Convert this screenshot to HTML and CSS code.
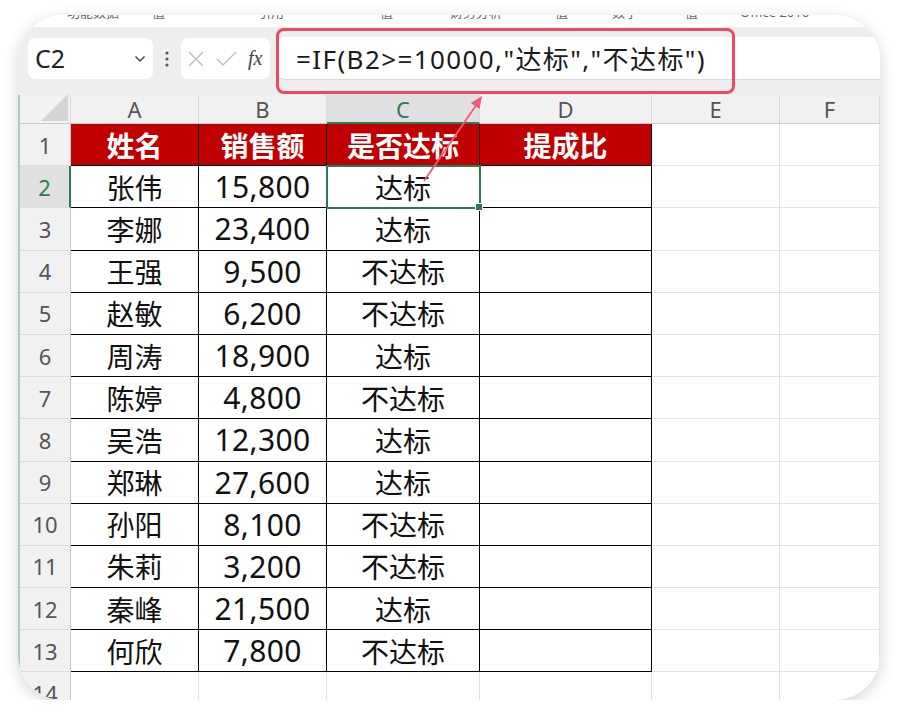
FILE: index.html
```html
<!DOCTYPE html>
<html lang="zh">
<head>
<meta charset="utf-8">
<link rel="stylesheet" href="styles.css">
</head>
<body>
<div class="card">
  <div class="ribbon">
    <span>功能数据</span><span>值</span><span>引用</span><span>值</span><span>财务分析</span><span>值</span><span>数字</span><span>值</span><span>Office 2016</span>
  </div>
  <div class="fbar">
    <div class="namebox">
      <span class="ref">C2</span>
      <svg class="chev" width="12" height="8" viewBox="0 0 12 8"><path d="M1.5 1.5 L6 6 L10.5 1.5" fill="none" stroke="#444" stroke-width="1.5"/></svg>
    </div>
    <div class="sep"><svg width="4" height="16" viewBox="0 0 4 16"><circle cx="2" cy="2" r="1.6" fill="#555"/><circle cx="2" cy="8" r="1.6" fill="#555"/><circle cx="2" cy="14" r="1.6" fill="#555"/></svg></div>
    <div class="fxbox">
      <svg width="16" height="16" viewBox="0 0 16 16"><path d="M1 1 L15 15 M15 1 L1 15" stroke="#bdbdbd" stroke-width="1.4" fill="none"/></svg>
      <svg width="21" height="16" viewBox="0 0 21 16"><path d="M1 8 L7 14 L20 1" stroke="#bdbdbd" stroke-width="1.4" fill="none"/></svg>
      <span class="fx">fx</span>
    </div>
    <div class="finput"><span class="ftext">=IF(B2&gt;=10000,"达标","不达标")</span></div>
  </div>
  <div class="grid">
    <table class="sheet">
      <colgroup>
        <col class="w-rh"><col class="w-a"><col class="w-b"><col class="w-c"><col class="w-d"><col class="w-e"><col class="w-f">
      </colgroup>
      <tr class="colhdr">
        <td class="corner"></td><td class="ch">A</td><td class="ch">B</td><td class="ch sel">C</td><td class="ch">D</td><td class="ch">E</td><td class="ch">F</td>
      </tr>
      <tr class="row">
        <td class="rh">1</td><td class="th">姓名</td><td class="th">销售额</td><td class="th">是否达标</td><td class="th">提成比</td><td class="g"></td><td class="g"></td>
      </tr>
      <tr class="row">
        <td class="rh sel">2</td><td class="d">张伟</td><td class="d n">15,800</td><td class="d active">达标</td><td class="d"></td><td class="g"></td><td class="g"></td>
      </tr>
      <tr class="row">
        <td class="rh">3</td><td class="d">李娜</td><td class="d n">23,400</td><td class="d">达标</td><td class="d"></td><td class="g"></td><td class="g"></td>
      </tr>
      <tr class="row">
        <td class="rh">4</td><td class="d">王强</td><td class="d n">9,500</td><td class="d">不达标</td><td class="d"></td><td class="g"></td><td class="g"></td>
      </tr>
      <tr class="row">
        <td class="rh">5</td><td class="d">赵敏</td><td class="d n">6,200</td><td class="d">不达标</td><td class="d"></td><td class="g"></td><td class="g"></td>
      </tr>
      <tr class="row">
        <td class="rh">6</td><td class="d">周涛</td><td class="d n">18,900</td><td class="d">达标</td><td class="d"></td><td class="g"></td><td class="g"></td>
      </tr>
      <tr class="row">
        <td class="rh">7</td><td class="d">陈婷</td><td class="d n">4,800</td><td class="d">不达标</td><td class="d"></td><td class="g"></td><td class="g"></td>
      </tr>
      <tr class="row">
        <td class="rh">8</td><td class="d">吴浩</td><td class="d n">12,300</td><td class="d">达标</td><td class="d"></td><td class="g"></td><td class="g"></td>
      </tr>
      <tr class="row">
        <td class="rh">9</td><td class="d">郑琳</td><td class="d n">27,600</td><td class="d">达标</td><td class="d"></td><td class="g"></td><td class="g"></td>
      </tr>
      <tr class="row">
        <td class="rh">10</td><td class="d">孙阳</td><td class="d n">8,100</td><td class="d">不达标</td><td class="d"></td><td class="g"></td><td class="g"></td>
      </tr>
      <tr class="row">
        <td class="rh">11</td><td class="d">朱莉</td><td class="d n">3,200</td><td class="d">不达标</td><td class="d"></td><td class="g"></td><td class="g"></td>
      </tr>
      <tr class="row">
        <td class="rh">12</td><td class="d">秦峰</td><td class="d n">21,500</td><td class="d">达标</td><td class="d"></td><td class="g"></td><td class="g"></td>
      </tr>
      <tr class="row">
        <td class="rh">13</td><td class="d">何欣</td><td class="d n">7,800</td><td class="d">不达标</td><td class="d"></td><td class="g"></td><td class="g"></td>
      </tr>
      <tr class="row">
        <td class="rh">14</td><td class="g"></td><td class="g"></td><td class="g"></td><td class="g"></td><td class="g"></td><td class="g"></td>
      </tr>
    </table>
  </div>
  <div class="callout"></div>
  <svg class="arrow" width="899" height="719" viewBox="0 0 899 719">
    <line x1="424" y1="181" x2="477" y2="104" stroke="#f0597a" stroke-width="1.8"/>
    <polygon points="482,96 479.6,109 470.8,103" fill="#f0597a"/>
  </svg>
</div>
</body>
</html>
```

FILE: styles.css
```css
body {
  margin: 0;
  background: #ffffff;
  font-family: "Noto Sans", "Noto Sans CJK SC", sans-serif;
}

.card {
  position: relative;
  margin: 15px 0 0 18px;
  width: 862px;
  height: 685px;
  border-radius: 45px;
  overflow: hidden;
  background: #ffffff;
  box-shadow: 0 4px 16px rgba(0, 0, 0, 0.17);
}

.ribbon {
  height: 12px;
  overflow: hidden;
  display: grid;
  grid-template-columns: 85px 106px 122px 70px 105px 57px 73px 55px auto;
  padding-left: 49px;
  font-family: "Noto Sans", "Noto Sans CJK SC", sans-serif;
  font-size: 13px;
  line-height: 14px;
  color: #666;
}

.ribbon span {
  margin-top: -10px;
  white-space: nowrap;
}

.fbar {
  height: 68px;
  box-sizing: border-box;
  background: #eeeeee;
  display: flex;
  align-items: flex-start;
  padding-left: 10px;
}

.namebox {
  margin-top: 11px;
  width: 125px;
  height: 41px;
  box-sizing: border-box;
  background: #fff;
  border-radius: 7px;
  display: flex;
  align-items: center;
  padding-left: 7px;
  padding-right: 7px;
}

.ref {
  font-size: 25px;
  color: #222;
  flex: 1;
  line-height: 1;
}

.chev {
  display: block;
}

.sep {
  width: 28px;
  height: 41px;
  margin-top: 11px;
  display: flex;
  align-items: center;
  justify-content: center;
}

.sep svg {
  display: block;
}

.fxbox {
  margin-top: 11px;
  width: 89px;
  height: 41px;
  box-sizing: border-box;
  background: #fff;
  border-radius: 7px;
  display: flex;
  align-items: center;
  padding-left: 7px;
  gap: 12px;
}

.fxbox svg {
  display: block;
}

.fx {
  font-family: "Liberation Serif", "DejaVu Serif", serif;
  font-style: italic;
  font-size: 20px;
  color: #444;
  margin-left: -1px;
}

.finput {
  margin-top: 10px;
  margin-left: 8px;
  flex: 1;
  height: 43px;
  background: #fff;
  border-radius: 6px 0 0 6px;
  border-bottom: 1px solid #dddddd;
  box-sizing: border-box;
  display: flex;
  align-items: center;
  padding-left: 18px;
}

.ftext {
  font-family: "Noto Sans", "Noto Sans CJK SC", sans-serif;
  font-size: 26px;
  color: #1a1a1a;
  letter-spacing: 1.4px;
  white-space: nowrap;
}

.grid {
  border-left: 2px solid #a9cfb9;
}

.sheet {
  table-layout: fixed;
  border-collapse: separate;
  border-spacing: 0;
  width: 860px;
}

.w-rh { width: 51px; }
.w-a { width: 128px; }
.w-b { width: 128px; }
.w-c { width: 153px; }
.w-d { width: 172px; }
.w-e { width: 128px; }
.w-f { width: 100px; }

.sheet td {
  padding: 0;
  text-align: center;
  vertical-align: middle;
  box-sizing: border-box;
}

.colhdr {
  height: 29px;
}

.colhdr td {
  background: #f1f1f1;
  border-right: 1px solid #d9d9d9;
  border-bottom: 1px solid #c9c9c9;
  font-size: 22px;
  line-height: 26px;
  color: #555;
}

.corner {
  position: relative;
}

.corner::after {
  content: "";
  position: absolute;
  right: 2px;
  bottom: 2px;
  width: 0;
  height: 0;
  border-left: 27px solid transparent;
  border-bottom: 27px solid #d4d4d4;
}

.colhdr td.sel {
  background: #e0e0e0;
  color: #2b7a50;
  border-bottom: 2px solid #2b7a50;
}

.row {
  height: 42.2px;
}

.rh {
  background: #f1f1f1;
  border-right: 1px solid #c9c9c9;
  border-bottom: 1px solid #dcdcdc;
  font-size: 22px;
  color: #555;
}

.rh.sel {
  background: #e0e0e0;
  color: #2b7a50;
  border-right: 2px solid #2b7a50;
}

.th {
  background: #c00000;
  color: #ffffff;
  font-weight: 700;
  font-family: "Noto Sans CJK SC", sans-serif;
  font-size: 28px;
  border-right: 1px solid #000;
  border-bottom: 1px solid #000;
}

.d {
  font-family: "Noto Sans", "Noto Sans CJK SC", sans-serif;
  font-size: 28px;
  color: #111;
  border-right: 1px solid #000;
  border-bottom: 1px solid #000;
}

.d.n {
  font-size: 30px;
  letter-spacing: 0.4px;
}

.g {
  border-right: 1px solid #e1e1e1;
  border-bottom: 1px solid #e1e1e1;
}

.active {
  position: relative;
  outline: 2px solid #2b7a50;
  outline-offset: -1px;
}

.active::after {
  content: "";
  position: absolute;
  right: -4px;
  bottom: -4px;
  width: 6px;
  height: 6px;
  background: #2b7a50;
  border: 1px solid #fff;
}

.callout {
  position: absolute;
  left: 258px;
  top: 13px;
  width: 459px;
  height: 66px;
  box-sizing: border-box;
  border: 3px solid #eb4a62;
  border-radius: 8px;
}

.arrow {
  position: absolute;
  left: -18px;
  top: -15px;
  pointer-events: none;
}
```
